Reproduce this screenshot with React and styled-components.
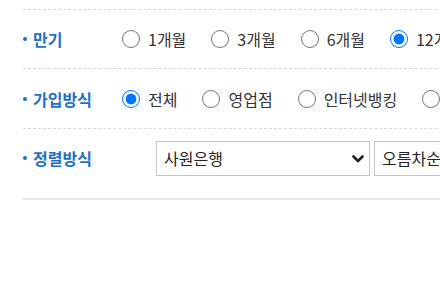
import React from 'react';
import styled, { createGlobalStyle } from 'styled-components';

const GlobalStyle = createGlobalStyle`
    html, body {
        margin: 0;
        padding: 0;
        background: #fff;
        overflow: hidden;
    }
    body {
        font-family: "Noto Sans CJK KR", "Noto Sans", sans-serif;
        color: #222;
    }
`;

const terms = [
    { label: '1개월', checked: false },
    { label: '3개월', checked: false },
    { label: '6개월', checked: false },
    { label: '12개월', checked: true },
];

const joins = [
    { label: '전체', checked: true },
    { label: '영업점', checked: false },
    { label: '인터넷뱅킹', checked: false },
    { label: '스마트폰', checked: false },
];

export default function App() {
    return (
        <Page>
            <GlobalStyle />
            <Filter>
                <Row $height={59}>
                    <Label>만기</Label>
                    <Options>
                        {terms.map((t) => (
                            <Option key={t.label}>
                                <Radio type="radio" name="term" defaultChecked={t.checked} />
                                {t.label}
                            </Option>
                        ))}
                    </Options>
                </Row>
                <Row $height={60}>
                    <Label>가입방식</Label>
                    <Options>
                        {joins.map((j) => (
                            <Option key={j.label}>
                                <Radio type="radio" name="join" defaultChecked={j.checked} />
                                {j.label}
                            </Option>
                        ))}
                    </Options>
                </Row>
                <SortRow>
                    <Label>정렬방식</Label>
                    <Selects>
                        <SelectBox $width={214}>
                            <span>사원은행</span>
                            <Chevron viewBox="0 0 12 8">
                                <path d="M1.5 1.5 L6 6 L10.5 1.5" />
                            </Chevron>
                        </SelectBox>
                        <SelectBox $width={160}>
                            <span>오름차순정렬</span>
                            <Chevron viewBox="0 0 12 8">
                                <path d="M1.5 1.5 L6 6 L10.5 1.5" />
                            </Chevron>
                        </SelectBox>
                    </Selects>
                </SortRow>
            </Filter>
        </Page>
    );
}

const Page = styled.div`
    padding-top: 9px;
    padding-left: 23px;
    width: 600px;
`;

const Filter = styled.div`
    border-top: 1px dashed #d9d9d9;
    border-bottom: 2px solid #e6e6e6;
`;

const Row = styled.div`
    display: flex;
    align-items: center;
    height: ${(p) => p.$height}px;
    box-sizing: border-box;
    border-bottom: 1px dashed #d9d9d9;
`;

const SortRow = styled.div`
    display: flex;
    align-items: center;
    height: 69px;
    padding-bottom: 11px;
    box-sizing: border-box;
`;

const Label = styled.div`
    display: flex;
    align-items: center;
    gap: 6px;
    width: 99px;
    flex-shrink: 0;
    font-size: 16px;
    font-weight: 700;
    color: #1f6fc5;

    &::before {
        content: '';
        width: 4px;
        height: 4px;
        border-radius: 50%;
        background: #1f6fc5;
    }
`;

const Options = styled.div`
    display: flex;
    align-items: center;
    gap: 25px;
`;

const Option = styled.label`
    display: flex;
    align-items: center;
    gap: 8px;
    font-size: 16px;
    color: #333;
    white-space: nowrap;
`;

const Radio = styled.input`
    width: 18px;
    height: 18px;
    margin: 0;
    accent-color: #0075ff;
`;

const Selects = styled.div`
    display: flex;
    gap: 4px;
    margin-left: 34px;
`;

const SelectBox = styled.div`
    position: relative;
    display: flex;
    align-items: center;
    width: ${(p) => p.$width}px;
    height: 35px;
    padding-left: 7px;
    box-sizing: border-box;
    border: 1px solid #c4c4c4;
    font-size: 16px;
    color: #222;
    flex-shrink: 0;
`;

const Chevron = styled.svg`
    position: absolute;
    right: 5px;
    top: 13px;
    width: 12px;
    height: 8px;
    fill: none;
    stroke: #222;
    stroke-width: 2.6;
    stroke-linecap: round;
    stroke-linejoin: round;
`;
